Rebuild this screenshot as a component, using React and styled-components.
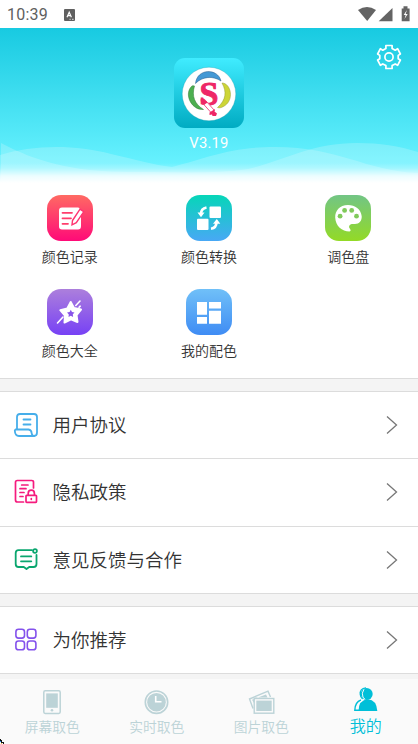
import React from "react";
import styled, { createGlobalStyle } from "styled-components";

const tools = [
  { name: "颜色记录", from: "#ff6a63", to: "#ff0a78", icon: "record" },
  { name: "颜色转换", from: "#06d6b8", to: "#48a8f5", icon: "convert" },
  { name: "调色盘", from: "#72c585", to: "#93da26", icon: "palette" },
  { name: "颜色大全", from: "#ac7fdc", to: "#7741f5", icon: "star" },
  { name: "我的配色", from: "#70c0f8", to: "#3f8cf4", icon: "scheme" },
];

const App = () => {
  return (
    <Page>
      <GlobalStyle />
      <StatusBar>
        <span>10:39</span>
        <KeyboardIcon />
        <SystemIcons />
      </StatusBar>
      <Header>
        <Waves />
        <SettingButton>
          <GearIcon />
        </SettingButton>
        <Logo />
        <Version>V3.19</Version>
      </Header>
      <ToolGrid>
        {tools.map((tool) => (
          <Tool key={tool.name}>
            <ToolBox $from={tool.from} $to={tool.to}>
              <ToolIcon type={tool.icon} />
            </ToolBox>
            <ToolName>{tool.name}</ToolName>
          </Tool>
        ))}
      </ToolGrid>
      <Divider />
      <MenuItem icon={<AgreementIcon />} title="用户协议" />
      <MenuItem icon={<PrivacyIcon />} title="隐私政策" />
      <MenuItem icon={<FeedbackIcon />} title="意见反馈与合作" />
      <Divider />
      <MenuItem icon={<RecommendIcon />} title="为你推荐" />
      <TabBar>
        <Tab>
          <ScreenIcon />
          <span>屏幕取色</span>
        </Tab>
        <Tab>
          <ClockIcon />
          <span>实时取色</span>
        </Tab>
        <Tab>
          <PhotoIcon />
          <span>图片取色</span>
        </Tab>
        <Tab $active>
          <UserIcon />
          <span>我的</span>
        </Tab>
      </TabBar>
      <CornerMark />
    </Page>
  );
};

export default App;

const MenuItem = ({ icon, title }) => (
  <MenuRow>
    {icon}
    <div className="title">{title}</div>
    <svg width="12" height="20" viewBox="0 0 12 20" fill="none">
      <path d="M1 1.5L10.5 10L1 18.5" stroke="#777" strokeWidth="1.3" />
    </svg>
  </MenuRow>
);

const KeyboardIcon = () => (
  <svg width="11" height="12" viewBox="0 0 11 12">
    <rect width="11" height="12" rx="1" fill="#606060" />
    <path
      d="M3 8.2L5.2 3.2L7.4 8.2M3.8 6.7H6.6"
      stroke="#fff"
      strokeWidth="1.2"
      fill="none"
    />
    <path d="M5.5 10.3H6.7M8 10.3H9.6" stroke="#fff" strokeWidth=".8" />
  </svg>
);

const SystemIcons = () => (
  <svg className="system" width="54" height="17" viewBox="0 0 54 17">
    <g fill="#646464">
      <path d="M2 4Q11-2.2 20 4L11.2 15Z" />
      <path d="M36.5 2V15.3H22.7Z" />
      <path d="M45.7 2.5H47.5V.3H51.5V2.5H53.6V15.3H45.7Z" />
    </g>
    <path d="M50.9 4L47.7 9H49.7L48.5 13L51.7 8H49.7Z" fill="#fff" />
  </svg>
);

const Waves = () => (
  <svg className="waves" width="418" height="156" viewBox="0 28 418 156">
    <defs>
      <linearGradient id="mist" x1="0" y1="163" x2="0" y2="183" gradientUnits="userSpaceOnUse">
        <stop offset="0" stopColor="#fff" stopOpacity="0" />
        <stop offset=".25" stopColor="#fff" stopOpacity=".2" />
        <stop offset=".65" stopColor="#fff" stopOpacity=".8" />
        <stop offset="1" stopColor="#fff" />
      </linearGradient>
    </defs>
    <g fill="#fff" fillOpacity=".2">
      <path d="M0 155C32 145 74 144 111 154C138 160 153 165 172 167C207 158 230 147 275 147C340 147 365 171 418 173V184H0Z" />
      <path d="M1 143C35 161 72 172 130 172C180 172 215 174 248 169C286 160 311 143 357 143C380 143 399 146 418 152V184H1Z" />
    </g>
    <rect x="0" y="158" width="418" height="26" fill="url(#mist)" />
  </svg>
);

const GearIcon = () => (
  <svg width="26" height="26" viewBox="0 0 26 26" fill="none" stroke="#fff" strokeWidth="1.7">
    <path
      strokeLinejoin="round"
      d="M9.9 1.5H16.1V4.4L19.2 6.2L21.6 4.7L24.4 10L22.2 11.4V14.7L24.4 16L21.6 21.3L19.2 19.9L16.1 21.6V24.5H9.9V21.6L6.8 19.9L4.4 21.3L1.6 16L3.8 14.7V11.4L1.6 10L4.4 4.7L6.8 6.2L9.9 4.4Z"
    />
    <circle cx="13" cy="13" r="4.1" />
  </svg>
);

const Logo = () => (
  <svg width="70" height="70" viewBox="0 0 70 70">
    <defs>
      <linearGradient id="logoBg" x1="0" y1="0" x2="0" y2="1">
        <stop offset="0" stopColor="#40ecff" />
        <stop offset="1" stopColor="#00abc2" />
      </linearGradient>
    </defs>
    <rect width="70" height="70" rx="11" fill="url(#logoBg)" />
    <circle cx="35" cy="36" r="26.8" fill="#fff" stroke="#149aaa" strokeOpacity=".45" strokeWidth=".7" />
    <path d="M21.5 25.5C23 10 44 10 47 23C39 17.5 28 18.5 21.5 25.5Z" fill="#4499d5" stroke="#315c89" strokeWidth=".5" />
    <path d="M20.5 28C17.5 38 20.5 46 29.5 51.5C18 52.5 10 37 17 29C18 27.5 19 27.5 20.5 28Z" fill="#4caf50" stroke="#317b39" strokeWidth=".5" />
    <path d="M48 25C57 25 61 43 49 48.7C47 50 45 50 43.5 49.5C52 42 53 34 48 25Z" fill="#cdd536" stroke="#92982c" strokeWidth=".5" />
    <text
      x="25.5"
      y="46.5"
      fontFamily="Liberation Serif"
      fontWeight="700"
      fontSize="34"
      fill="#ee2766"
      stroke="#ee2766"
      strokeWidth="1"
    >
      S
    </text>
    <path d="M27.5 44L31.5 42L40.5 52L36.5 55Z" fill="#fff" />
    <path d="M28.5 45L37 54.5M32 43L40.5 52.5" stroke="#ee2766" strokeWidth=".8" />
    <path d="M26.5 41.5Q29 39.5 31.5 42L33.5 44.5L30 47L27 44.5Z" fill="#ee2766" />
    <path d="M35.5 54.5L41 51L40.5 53.5L43 55.5L42 58L38.5 58L38 56.5L35.5 57Z" fill="#ee2766" />
  </svg>
);

const ToolIcon = ({ type }) => (
  <svg width="46" height="46" viewBox="0 0 46 46" fill="#fff">
    {type === "record" && (
      <>
        <path d="M15 12.5H31Q33 12.5 32.7 14L34 16L34 31Q34 34.5 31 34.5H15Q12 34.5 12 31.5V15.5Q12 12.5 15 12.5Z" />
        <path
          d="M15.5 17.8H25M15.5 23.3H24M15.5 28.8H21"
          stroke="#ff3e6c"
          strokeWidth="1.8"
          strokeLinecap="round"
        />
        <path d="M25.5 25.5L33 14.2L36.7 16.8L29.3 27.7L25 29.8Z" stroke="#ff3470" strokeWidth="1.4" />
      </>
    )}
    {type === "convert" && (
      <>
        <rect x="23.5" y="11.5" width="11.5" height="11.5" rx="1" />
        <rect x="11" y="23.7" width="11.5" height="11.3" rx="1" />
        <path d="M20.5 12.5Q15 13.5 15 19M25 33.7Q30.5 33 30.5 27" fill="none" stroke="#fff" strokeWidth="2.6" />
        <path d="M11.5 17.5H18.5L15 22.2ZM27 28.8H34.3L30.8 24Z" />
      </>
    )}
    {type === "palette" && (
      <>
        <path d="M23 10C14.5 10 10 16 10.2 22.5C10.5 31 17 36.4 24.5 36.4C26 36.4 26 35 24.6 33.3C23 30.5 25.5 28.5 29 29C34 29.5 37 26 36.7 21.3C36 14 30 10 23 10Z" />
        <g fill="#80ca5b">
          <circle cx="15.1" cy="21.2" r="2.4" />
          <circle cx="19.6" cy="15.4" r="2.4" />
          <circle cx="26.7" cy="15.4" r="2.4" />
          <circle cx="31.5" cy="21.2" r="2.4" />
        </g>
      </>
    )}
    {type === "star" && (
      <>
        <path
          d="M23.7 13L27 19L34 20.5L29.5 26L30.5 33L24 30.3L17.5 33.5L18 26.5L13.3 21.2L20.3 19.5Z"
          stroke="#fff"
          strokeWidth="2"
          strokeLinejoin="round"
        />
        <path d="M23.8 20.7L25 23L27.5 23.5L25.8 25.3L26.1 28L23.8 26.8L21.5 28L21.8 25.4L20 23.5L22.6 23Z" fill="#8955e9" />
        <path d="M10.5 34L16 28M28.8 16.5L33 12M32 18.3L33.2 17.2" fill="none" stroke="#fff" strokeWidth="1.6" strokeLinecap="round" />
      </>
    )}
    {type === "scheme" && (
      <path d="M11 13H21V25.7H11ZM23 13H35V19.5H23ZM11 28H21V34.7H11ZM23 21.7H35V34.7H23Z" />
    )}
  </svg>
);

const AgreementIcon = () => (
  <svg width="26" height="26" viewBox="0 0 26 26" fill="none" stroke="#46aeea" strokeWidth="1.8" strokeLinecap="round" strokeLinejoin="round">
    <path d="M4 17V5Q4 2 7 2H21Q24 2 24 5V20.5Q24 24 21 24H6Q2 24 1.8 18.5L2.5 17.5H15.5Q18.5 18 18.6 21Q19 24 21.5 24" />
    <path d="M10.5 7.5H17.5M10.5 12.5H17.5" />
  </svg>
);

const PrivacyIcon = () => (
  <svg width="26" height="26" viewBox="0 0 26 26" fill="none" stroke="#f51b7e" strokeWidth="1.7" strokeLinecap="round">
    <path d="M20.5 9V3.2Q20.5 1.5 18.8 1.5H4.3Q2.5 1.5 2.5 3.2V21Q2.5 23 4.5 23H10.5" />
    <path d="M8.7 6H15M7 9.7H13M7 13.5H11M7 17.5H10" />
    <path d="M15.2 16.2V14.4Q15.2 11.2 18.3 11.2Q21.4 11.2 21.4 14.4V16.2" />
    <rect x="13" y="16.3" width="10.5" height="7" rx=".7" />
    <path d="M18.3 19.5V20.3" />
  </svg>
);

const FeedbackIcon = () => (
  <svg width="26" height="26" viewBox="0 0 26 26" fill="none" stroke="#0aa66f" strokeWidth="1.8" strokeLinecap="round" strokeLinejoin="round">
    <path d="M19 3.2H5.5Q2.7 3.2 2.7 6V17Q2.7 20 5.5 20H10.8L13.5 22L16.2 20H20.5Q23.5 20 23.5 17V8" />
    <path d="M8 9.4H18.3M8 14.3H18.3" />
    <circle cx="22" cy="4" r="1.9" />
  </svg>
);

const RecommendIcon = () => (
  <svg width="26" height="26" viewBox="0 0 26 26" fill="none" stroke="#8452ec" strokeWidth="1.6">
    <rect x="2.9" y="2.3" width="8.6" height="8.8" rx="2.6" />
    <rect x="14.3" y="2.3" width="8.6" height="8.8" rx="2.6" />
    <rect x="2.9" y="14" width="8.6" height="8.8" rx="2.6" />
    <rect x="14.3" y="14" width="8.6" height="8.8" rx="2.6" />
  </svg>
);

const ScreenIcon = () => (
  <svg width="18" height="25" viewBox="0 0 18 25">
    <rect x=".8" y=".8" width="16.4" height="22.6" rx="1.4" fill="none" stroke="#bcd3d7" strokeWidth="1.5" />
    <rect x="3.2" y="3.4" width="11.6" height="14.4" fill="#bcd3d7" />
    <circle cx="9" cy="20.2" r="1.3" fill="#bcd3d7" />
  </svg>
);

const ClockIcon = () => (
  <svg width="25" height="25" viewBox="0 0 25 25" fill="none">
    <circle cx="12.5" cy="12.2" r="11.2" stroke="#bcd3d7" strokeWidth="1.6" />
    <circle cx="12.5" cy="12.2" r="9.3" fill="#bcd3d7" />
    <path d="M11.7 6V11.7H17.5" stroke="#fff" strokeWidth="1.6" />
  </svg>
);

const PhotoIcon = () => (
  <svg width="27" height="25" viewBox="0 0 27 25" fill="none" stroke="#bcd3d7" strokeWidth="1.4">
    <path d="M5 18.5L1.5 9L20 1.2L22.5 7" />
    <path d="M4 9.8L18 4.4L19.5 7.5H7L6 13Z" fill="#bcd3d7" stroke="none" />
    <rect x="6.2" y="8.5" width="19.6" height="14.7" />
    <rect x="8.3" y="10.6" width="15.4" height="10.4" fill="#bcd3d7" stroke="none" />
  </svg>
);

const UserIcon = () => (
  <svg width="24" height="25" viewBox="0 0 24 25" fill="#00bfd8">
    <circle cx="12.7" cy="7" r="6" />
    <path d="M4.5 24Q4.5 13 14 12.3Q22.5 13 23.3 24Z" />
    <path d="M12 .9Q5.5 1.5 6.3 7.5Q6.6 10.5 8.6 12M7 13Q1 15 .8 23.3H5" fill="none" stroke="#00bfd8" strokeWidth="1.4" />
    <path d="M10 2.2Q7.2 6 9 10.5L10.5 11.5L8 13.5Q4 15.5 3.3 22" fill="none" stroke="#fafafa" strokeWidth="1" />
  </svg>
);

const CornerMark = () => (
  <CornerSvg width="5" height="5" viewBox="0 0 5 5">
    <path d="M0 0H1V1H2V3H4V5H3V4H1V2H0Z" fill="#111" />
    <path d="M0 2H1V3H0Z" fill="#2196f3" />
    <path d="M1 4H2V5H1Z" fill="#d8c94d" />
  </CornerSvg>
);

const GlobalStyle = createGlobalStyle`
  * {
    box-sizing: border-box;
  }
  body {
    margin: 0;
    background: #fff;
    font-family: Roboto, "Noto Sans CJK SC", sans-serif;
  }
  svg {
    display: block;
    flex-shrink: 0;
  }
`;

const Page = styled.div`
  position: relative;
  width: 418px;
  height: 744px;
  overflow: hidden;
  display: flex;
  flex-direction: column;
  background: #fff;
`;

const StatusBar = styled.div`
  height: 28px;
  padding: 1px 8px 0 7px;
  display: flex;
  align-items: center;
  gap: 16px;
  color: #606060;
  font-size: 16px;
  line-height: 27px;
  letter-spacing: 0.25px;

  .system {
    margin-left: auto;
    margin-bottom: 1px;
  }
`;

const Header = styled.header`
  position: relative;
  height: 156px;
  padding-top: 30px;
  display: flex;
  flex-direction: column;
  align-items: center;
  background: linear-gradient(#18cae1, #68f2ff 88%);

  .waves {
    position: absolute;
    top: 0;
    left: 0;
  }
  > svg {
    position: relative;
  }
`;

const SettingButton = styled.div`
  position: absolute;
  top: 16px;
  right: 16px;
  cursor: pointer;
`;

const Version = styled.div`
  position: relative;
  margin-top: 6px;
  color: #fff;
  font-size: 14.8px;
  line-height: 18px;
  letter-spacing: 0.2px;
`;

const ToolGrid = styled.div`
  height: 194px;
  padding-top: 11px;
  display: grid;
  grid-template-columns: repeat(3, 1fr);
  grid-auto-rows: 94.4px;
`;

const Tool = styled.div`
  display: flex;
  flex-direction: column;
  align-items: center;
`;

const ToolBox = styled.div`
  width: 46px;
  height: 46px;
  border-radius: 14px;
  background: linear-gradient(${(props) => props.$from}, ${(props) => props.$to});
`;

const ToolName = styled.div`
  margin-top: 6px;
  color: #333;
  font-size: 14px;
  font-weight: 350;
  line-height: 20px;
`;

const Divider = styled.div`
  height: 13px;
  flex-shrink: 0;
  border-top: 1px solid #dcdcdc;
  background: #f4f4f4;
`;

const MenuRow = styled.div`
  height: 67.3px;
  flex-shrink: 0;
  padding: 0 20px 0 13px;
  display: flex;
  align-items: center;
  border-top: 1px solid #dcdcdc;
  background: #fff;

  .title {
    flex: 1;
    margin-left: 13.5px;
    padding-top: 2px;
    color: #333;
    font-size: 18.5px;
    font-weight: 350;
    line-height: 28px;
  }
`;

const TabBar = styled.nav`
  flex: 1;
  display: flex;
  border-top: 1px solid #dcdcdc;
  background: linear-gradient(#f4f4f4 5px, #fafafa 5px);
`;

const Tab = styled.div`
  flex: 1;
  padding-top: ${(props) => (props.$active ? "13px" : "15.5px")};
  display: flex;
  flex-direction: column;
  align-items: center;
  color: ${(props) => (props.$active ? "#00bfd8" : "#bcd3d7")};
  font-size: ${(props) => (props.$active ? "16px" : "13.8px")};
  font-weight: 350;
  cursor: pointer;

  span {
    margin-top: ${(props) => (props.$active ? "5px" : "2.5px")};
    line-height: 20px;
  }
`;

const CornerSvg = styled.svg`
  position: absolute;
  left: 0;
  bottom: 0;
`;
